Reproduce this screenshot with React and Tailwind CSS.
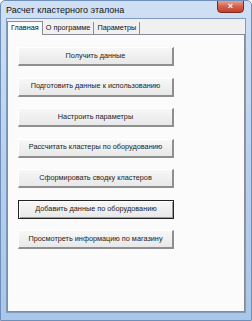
import React from "react";

const buttons = [
  "Получить данные",
  "Подготовить данные к использованию",
  "Настроить параметры",
  "Рассчитать кластеры по оборудованию",
  "Сформировать сводку кластеров",
  "Добавить данные по оборудованию",
  "Просмотреть информацию по магазину",
];

function WinButton({ label, focused }) {
  return (
    <button
      className={
        "w-[156px] h-[19px] flex items-center justify-center text-[7.3px] text-[#222] bg-gradient-to-b from-[#f7f7f7] to-[#e8e8e8] " +
        (focused
          ? "border border-[#222] shadow-[inset_1px_1px_0_#fff,inset_-1px_-1px_0_#9a9a9a]"
          : "border-t border-l border-t-white border-l-white border-r-2 border-b-2 border-r-[#8f8f8f] border-b-[#8f8f8f]")
      }
    >
      {label}
    </button>
  );
}

export default function App() {
  return (
    <div
      className="w-[252px] h-[321px] flex flex-col bg-gradient-to-b from-[#cfe0f4] via-[#b9d0ec] to-[#aac6e8] border border-[#6d8fb9] rounded-t-[5px] overflow-hidden"
      style={{ fontFamily: '"Liberation Sans", Arial, sans-serif' }}
    >
      {/* title bar */}
      <div className="h-[17px] flex items-start justify-between pl-[5px]">
        <span className="text-[9px] text-[#111] mt-[3px]">Расчет кластерного эталона</span>
        <div className="w-[27px] h-[13px] mr-[7px] -mt-px rounded-b-[4px] border border-[#7a2a20] bg-gradient-to-b from-[#e9a192] via-[#d2604c] to-[#c0402c] flex items-center justify-center">
          <span className="text-white text-[9px] font-bold leading-none">×</span>
        </div>
      </div>

      {/* client area */}
      <div className="flex-1 mx-[5px] mb-[7px] bg-[#f0f0f0] border border-[#7f9bbf] flex flex-col pt-px">
        {/* tabs */}
        <div className="h-[14px] flex items-end">
          <div className="h-[14px] px-[3px] bg-[#fbfbfb] border border-b-0 border-[#898c95] text-[7.3px] text-[#111] flex items-center relative top-px z-10">
            Главная
          </div>
          <div className="h-[12px] px-[3px] border-r border-[#898c95] text-[7.3px] text-[#111] flex items-center">
            О программе
          </div>
          <div className="h-[12px] px-[3px] border-r border-[#898c95] text-[7.3px] text-[#111] flex items-center">
            Параметры
          </div>
        </div>

        {/* panel */}
        <div className="flex-1 bg-[#fbfbfb] border border-[#898c95] flex flex-col gap-[11.5px] pt-[12px] pl-[10px]">
          {buttons.map((b, i) => (
            <WinButton key={b} label={b} focused={i === 5} />
          ))}
        </div>
      </div>
    </div>
  );
}
